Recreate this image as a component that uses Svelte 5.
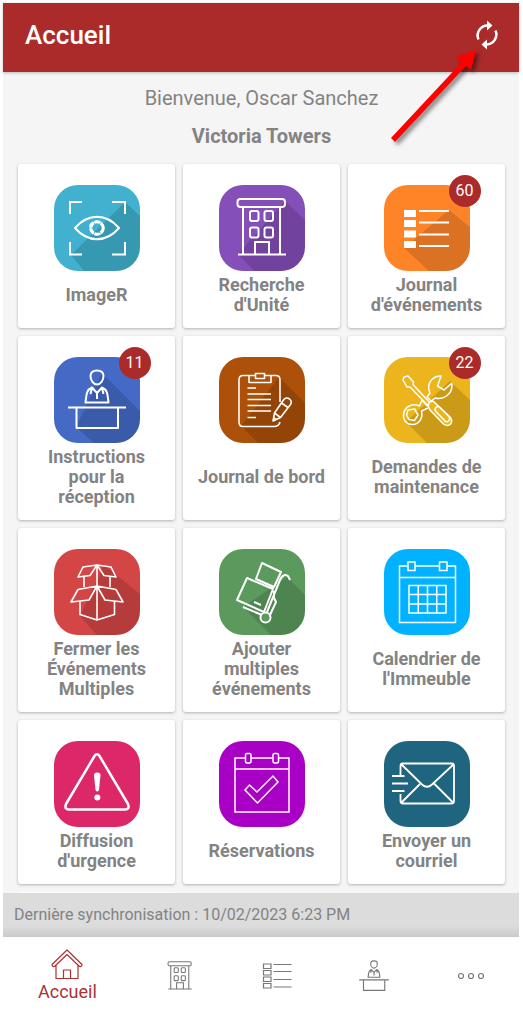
<script>
  const tiles = [
    { icon: 'eye', label: 'ImageR', color: '#41b1cf', shade: 'M71 17 86 31V86H30L17 70Z' },
    { icon: 'building', label: "Recherche d'Unité", color: '#844fb8', shade: 'M66 16 86 35V86H35L19 69Z' },
    { icon: 'list', label: "Journal d'événements", color: '#ff8428', shade: 'M65 25 86 42V86H45L20 63Z', badge: 60 },
    { icon: 'desk', label: 'Instructions pour la réception', color: '#446ac6', shade: 'M48 16 86 54V86H40L22 70Z', badge: 11 },
    { icon: 'clipboard', label: 'Journal de bord', color: '#ad5009', shade: 'M60 20 86 46V86H39L22 69Z' },
    { icon: 'tools', label: 'Demandes de maintenance', color: '#edb51d', shade: 'M66 24 86 43V86H43L22 65Z', badge: 22 },
    { icon: 'boxes', label: 'Fermer les Événements Multiples', color: '#d44545', shade: 'M50 16 86 45V86H43L26 67Z' },
    { icon: 'cart', label: 'Ajouter multiples événements', color: '#5b9a5c', shade: 'M68 28 86 46V86H52L24 58Z' },
    { icon: 'calendar', label: "Calendrier de l'Immeuble", color: '#00b2ff' },
    { icon: 'alert', label: "Diffusion d'urgence", color: '#dc2868' },
    { icon: 'booking', label: 'Réservations', color: '#a900c6' },
    { icon: 'mail', label: 'Envoyer un courriel', color: '#206580' }
  ];
</script>

{#snippet building()}
  <rect x="18.5" y="14" width="47.5" height="8" rx="3" />
  <path d="M24 22V69M61 22V69M19 69.5H67M36 69V57H50V69" />
  <rect x="31" y="26" width="8.5" height="10" rx="2" />
  <rect x="45.5" y="26" width="8.5" height="10" rx="2" />
  <rect x="31" y="42.5" width="8.5" height="10" rx="2" />
  <rect x="45.5" y="42.5" width="8.5" height="10" rx="2" />
{/snippet}

{#snippet desk()}
  <path d="M43 13.5C39 13.5 36.5 15.5 36.5 19 36.5 23.5 39.5 27.5 43 27.5S49.5 23.5 49.5 19C49.5 15.5 47 13.5 43 13.5Z" />
  <path d="M38 30.500C33 32.500 32.500 36 31.500 45.500H54.500C53.500 36 53 32.500 48 30.500L43 36ZM43 34V42M38 31 36.500 37M48 31 49.500 37" />
  <path d="M14 50.500H72M22.500 51V71H64V51" />
{/snippet}

<div class="app">
  <header>
    <h1>Accueil</h1>
    <button class="sync" aria-label="Synchroniser">
      <svg width="30" height="36" viewBox="0 0 30 36" fill="none" stroke="#fff" stroke-width="2.500">
        <path d="M6.500 22.500A10 10 0 0 1 15.500 8.500M23.500 13.500A10 10 0 0 1 14.500 27.500" />
        <path d="M15 3.500 20.500 8.500 15 13.500ZM15 22.500 9.500 27.500 15 32.500Z" fill="#fff" stroke="none" />
      </svg>
    </button>
    <svg class="pointer" width="100" height="104" viewBox="0 0 100 104" aria-hidden="true">
      <path d="M5 94 75 19 70 13 90 6 85 26 80 22 9 98Z" fill="#f00" />
    </svg>
  </header>

  <main>
    <p class="welcome">Bienvenue, Oscar Sanchez</p>
    <h2>Victoria Towers</h2>
    <div class="grid">
      {#each tiles as tile}
        <button class="card">
          <span class="icon">
            <svg viewBox="0 0 86 86" fill="none" stroke="#fff" stroke-width="2" stroke-linejoin="round" aria-hidden="true" style:background={tile.color}>
              {#if tile.shade}
                <path d={tile.shade} fill="#000" fill-opacity=".14" stroke="none" />
              {/if}
              {#if tile.icon === 'eye'}
                <path stroke-linejoin="miter" d="M16 29V17H28M58 17H71V29M71 57V69.500H58M28 69.500H16V57" />
                <path d="M21 43C34 28 52 28 65 43 52 58 34 58 21 43Z" />
                <circle cx="43" cy="43" r="6.200" stroke-width="3" stroke-dasharray="5.700 .8" />
                <path stroke-width="1" d="M36 39 42 36.500 48 38 50 43 47 49 41 50 36.500 46Z" />
              {:else if tile.icon === 'building'}
                {@render building()}
              {:else if tile.icon === 'list'}
                <path fill="#fff" stroke="none" d="M20 25H32V32H20ZM20 35H32V42H20ZM20 45.500H32V52.500H20ZM20 56H32V63H20Z" />
                <path d="M35 26H65M35 37.500H65M35 49.500H65M35 61H65" />
              {:else if tile.icon === 'desk'}
                {@render desk()}
              {:else if tile.icon === 'clipboard'}
                <path stroke-width="1.600" d="M61 45V23Q61 18.500 57 18.500H24Q20 18.500 20 23V65Q20 69.500 24 69.500H55Q60 69.500 61 65" />
                <path stroke-width="1.600" d="M30 19V25.500H52V19" />
                <rect x="36.500" y="16.500" width="9" height="5" fill={tile.color} stroke-width="1.600" />
                <path stroke-width="1.600" d="M28.500 31H37M28.500 37H52M28.500 42.500H52M28.500 48.500H52M28.500 54H52M28.500 60.500H37" />
                <path stroke-width="1.600" d="M54 64 55.500 56 64.500 43Q67 39.500 70.500 42 73.500 44.500 71.500 47.500L61.500 60.500ZM55.500 56 61.500 60.500M62.500 46 69 50.500" />
                <path fill="#fff" stroke="none" d="M54 64 55 60 58 62Z" />
              {:else if tile.icon === 'tools'}
                <g stroke-width="1.500">
                  <path d="M57 19C48 19 42 27 46 36L43 40 47 44 51 41C59 43 68 38 68 28L67.500 26.500 60 33 53.500 29Z" />
                  <path d="M38 43 35.500 49C29 45.500 20 49.500 19.500 58 19 64 24 68 29 67.500 36 67 39 60 37.500 54L44 51M38 43 43 49" />
                  <path d="M24 53 30.500 52 34 58 30.500 63.500 25 62.500 22.500 58Z" />
                  <path fill={tile.color} d="M20 20 24 19 29.500 25 29 27.500 47 47 44.500 49 26 30 23 30 19 23Z" />
                  <path fill={tile.color} d="M44 49 45.500 45 49 44 66 60Q69 64 66.500 67T59.500 67L46 53Z" />
                  <path d="M52 50.500Q54 48.500 56 50.500L65 59.500Q66.500 62 64.500 64T60.500 63.500L52 54.500Q50 52.500 52 50.500Z" />
                </g>
              {:else if tile.icon === 'boxes'}
                <path stroke-width="1.600" d="M43 16V71M43 16 29 18 24 28 36 26.500 43 16 57 18 62 28 50 26.500 43 16M30 27.500V38M56 27.500V38M43 37 24 40.500 17 53 35 51 43 37 62 40.500 69 53 51 51 43 37M26 52V65.500L43 71 60.500 65.500V52" />
              {:else if tile.icon === 'cart'}
                <path d="M43 14 62 23 55 38 37 30ZM28 29 54 40 45 63 18 51ZM35 53 42 56M24 58 43 66M48 63 61 31Q64 24 69 27L71 31M55 49V42M55 49 57 53 51 66" />
                <circle cx="46.500" cy="68.500" r="5" fill={tile.color} />
              {:else if tile.icon === 'calendar'}
                <g stroke-width="1.500" stroke-linejoin="miter">
                  <path d="M24 17H15.500V73.500H71.500V17H63M31 17H55M15.500 28.500H71.500" />
                  <path d="M24 13H31V21.500H24ZM55.500 13H63V21.500H55.500ZM25 36.500H62V64H25ZM34.250 36.500V64M43.500 36.500V64M52.750 36.500V64M25 45.500H62M25 55H62" />
                </g>
              {:else if tile.icon === 'alert'}
                <path stroke-width="2.500" d="M40.500 15Q43 11.500 45.500 15L74 63Q76 68.500 71 68.500H15Q10 68.500 12 63Z" />
                <path fill="#fff" stroke="none" d="M40 34Q40 31.500 43.200 31.500T46.500 34L45 49Q43.200 52 41.500 49Z" />
                <circle cx="43.300" cy="56.500" r="3" fill="#fff" stroke="none" />
              {:else if tile.icon === 'booking'}
                <g stroke-width="1.500" stroke-linejoin="miter">
                  <path d="M26 17H16V71H70V17H60M32 17H53.500M16 28H70" />
                  <rect x="26.500" y="12.500" width="5.500" height="9.500" rx="1.500" />
                  <rect x="54" y="12.500" width="5.500" height="9.500" rx="1.500" />
                  <path d="M26 49 30.500 44 38 51 54 35 59 41 38.500 62Z" />
                </g>
              {:else}
                <path stroke-width="1.800" d="M16.500 34V25Q16.500 22.500 19 22.500H67.500Q70 22.500 70 25V60Q70 62.500 67.500 62.500H19Q16.500 62.500 16.500 60V53M17 23 38 43.500Q43 48 48 43.500L70 23M17 62 36 43M69.500 62 50 42.500M8 35H20.500M8 42.500H24M8 50H20.500" />
              {/if}
            </svg>
            {#if tile.badge}<span class="badge">{tile.badge}</span>{/if}
          </span>
          <span class="label">{tile.label}</span>
        </button>
      {/each}
      <div class="peek"></div>
    </div>
  </main>

  <p class="status">Dernière synchronisation : 10/02/2023 6:23 PM</p>

  <nav>
    <a href="#accueil" class="active" aria-current="page">
      <svg width="32" height="31" viewBox="0 0 32 31" fill="none" stroke="currentColor" stroke-width="1.200" stroke-linejoin="round" aria-hidden="true">
        <path d="M16 1 31 15.500Q31 18 28.500 17.500L16 5.500 3.500 17.500Q1 18 1 15.500ZM5 16.500V29.500H27V16.500M12.500 29.500V21H19.500V29.500" />
      </svg>
      <span>Accueil</span>
    </a>
    <a href="#unites" aria-label="Recherche d'Unité">
      <svg width="42" height="42" viewBox="0 0 86 86" fill="none" stroke="currentColor" stroke-width="2.200" aria-hidden="true">{@render building()}</svg>
    </a>
    <a href="#journal" aria-label="Journal d'événements">
      <svg width="30" height="28" viewBox="0 0 30 28" fill="none" stroke="currentColor" stroke-width="1.200" aria-hidden="true">
        <path d="M1.500 2H9V6.500H1.500ZM1.500 8.500H9V13H1.500ZM1.500 15H9V19.500H1.500ZM1.500 21.500H9V26H1.500ZM11.500 2.500H29.500M11.500 9.500H29.500M11.500 17.500H29.500M11.500 25H29.500" />
      </svg>
    </a>
    <a href="#reception" aria-label="Instructions pour la réception">
      <svg width="44" height="44" viewBox="0 0 86 86" fill="none" stroke="currentColor" stroke-width="2.200" aria-hidden="true">{@render desk()}</svg>
    </a>
    <a href="#plus" aria-label="Plus">
      <svg width="28" height="8" viewBox="0 0 28 8" fill="none" stroke="currentColor" stroke-width="1.200" aria-hidden="true">
        <circle cx="4" cy="4" r="2.500" /><circle cx="14" cy="4" r="2.500" /><circle cx="24" cy="4" r="2.500" />
      </svg>
    </a>
  </nav>
</div>

<style>
  :global(body) {
    background: #fff;
    font-family: Roboto, sans-serif;
  }
  .app {
    margin: 3px 4px 3px 3px;
    background: #f5f5f5;
    color: #838383;
  }
  header {
    position: relative;
    display: flex;
    align-items: center;
    justify-content: space-between;
    height: 69px;
    padding: 0 17px 6px 22px;
    box-sizing: border-box;
    background: #ab2b2b;
    box-shadow: 0 1px 3px rgba(0, 0, 0, 0.25);
  }
  h1 {
    margin: 0;
    color: #fff;
    font-size: 26px;
    font-weight: 500;
  }
  button {
    border: 0;
    padding: 0;
    font: inherit;
    color: inherit;
  }
  .sync {
    display: flex;
    background: none;
  }
  .pointer {
    position: absolute;
    right: 33px;
    top: 41px;
    pointer-events: none;
    filter: drop-shadow(3px 3px 2px rgba(0, 0, 0, 0.45));
  }
  main {
    padding: 12px 14px 0 15px;
  }
  .welcome,
  h2 {
    margin: 0 0 10px;
    text-align: center;
    font-size: 20px;
    line-height: 28px;
    font-weight: 400;
  }
  h2 {
    margin-bottom: 14px;
    font-weight: 700;
  }
  .grid {
    display: grid;
    grid-template-columns: repeat(3, 1fr);
    gap: 8px;
  }
  .card {
    display: flex;
    flex-direction: column;
    align-items: center;
    padding: 21px 14px 13px;
    border-radius: 3px;
    background: #fff;
    box-shadow: 0 1px 3px rgba(0, 0, 0, 0.28);
  }
  .icon {
    position: relative;
    display: flex;
    margin-bottom: 4px;
  }
  .icon svg {
    width: 86px;
    height: 86px;
    border-radius: 24px;
  }
  .badge {
    position: absolute;
    left: 65px;
    top: -10px;
    width: 32px;
    height: 32px;
    border-radius: 50%;
    background: #ab2b2b;
    color: #fff;
    font-size: 16px;
    line-height: 32px;
    text-align: center;
  }
  .label {
    display: flex;
    flex: 1;
    align-items: center;
    min-height: 40px;
    font-size: 18px;
    line-height: 20px;
    font-weight: 700;
    text-align: center;
  }
  .peek {
    height: 1px;
    background: #fff;
  }
  .status {
    margin: 0;
    padding: 0 11px;
    background: linear-gradient(#dcdcdc 75%, #cacaca);
    font-size: 16px;
    line-height: 44px;
  }
  nav {
    display: grid;
    grid-template-columns: 129fr 97fr 97fr 97fr 97fr;
    height: 78px;
    background: #fff;
  }
  nav a {
    display: flex;
    flex-direction: column;
    align-items: center;
    justify-content: center;
    color: #777;
    text-decoration: none;
  }
  nav .active {
    color: #a33;
    font-size: 18px;
    line-height: 24px;
  }
</style>
